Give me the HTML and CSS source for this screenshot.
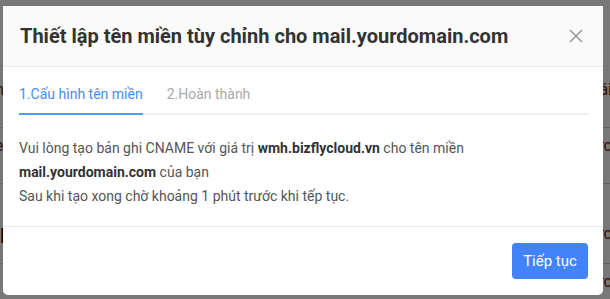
FILE: index.html
```html
<!DOCTYPE html>
<html lang="vi">
<head>
    <meta charset="UTF-8">
    <meta name="viewport" content="width=device-width, initial-scale=1.0">
    <title>Thiết lập tên miền</title>
    <link rel="stylesheet" href="styles.css">
</head>
<body>
<!-- Trang phía sau lớp phủ -->
<div class="page">
    <div class="page-row"><span class="cell-left">Tên miền</span><span class="cell-right">Trạng thái</span></div>
    <div class="page-row"><span class="cell-left">mail.example.vn</span><span class="cell-right">Chưa xác thực</span></div>
    <div class="page-row tall"><span class="cell-left dark">Cấu hình</span><span class="cell-right">Chưa xác thực</span></div>
    <div class="page-row"><span class="cell-left dark">Mã</span><span class="cell-right">Đã xác thực</span></div>
</div>

<div class="overlay">
    <div class="modal">
        <div class="modal-header">
            <h2 class="modal-title">Thiết lập tên miền tùy chỉnh cho mail.yourdomain.com</h2>
            <button class="modal-close" aria-label="Đóng">
                <svg width="14" height="14" viewBox="0 0 14 14">
                    <path d="M1 1L13 13M13 1L1 13" stroke="#999" stroke-width="1.6" fill="none"/>
                </svg>
            </button>
        </div>

        <div class="modal-body">
            <div class="steps">
                <div class="step active">1.Cấu hình tên miền</div>
                <div class="step">2.Hoàn thành</div>
            </div>

            <div class="step-content">
                <p>Vui lòng tạo bản ghi CNAME với giá trị <b>wmh.bizflycloud.vn</b> cho tên miền <b>mail.yourdomain.com</b> của bạn</p>
                <p>Sau khi tạo xong chờ khoảng 1 phút trước khi tếp tục.</p>
            </div>
        </div>

        <div class="modal-footer">
            <button class="btn-primary">Tiếp tục</button>
        </div>
    </div>
</div>
</body>
</html>
```

FILE: styles.css
```css
body {
    margin: 0;
    padding: 0;
    font-family: Roboto, 'Liberation Sans', sans-serif;
    background-color: #ffffff;
    height: 100vh;
    overflow: hidden;
}

/* Trang phía sau */
.page {
    height: 100vh;
    overflow: hidden;
    padding-top: 72px;
    box-sizing: border-box;
}

.page-row {
    display: flex;
    justify-content: space-between;
    height: 56px;
    padding: 8px 0;
    box-sizing: border-box;
    border-bottom: 1px solid #cfcfcf;
    font-size: 16px;
    color: #5a2a1a;
    margin: 0 -2px 0 -40px;
}

.page-row.tall {
    height: 80px;
    padding-top: 40px;
}

.cell-left.dark {
    color: #111;
    font-size: 20px;
}

/* Lớp phủ */
.overlay {
    position: fixed;
    inset: 0;
    background-color: rgba(0, 0, 0, 0.53);
}

.modal {
    width: 600px;
    margin: 6px 0 0 3px;
    background-color: #ffffff;
    border-radius: 0 0 5px 5px;
}

/* Tiêu đề */
.modal-header {
    display: flex;
    align-items: center;
    justify-content: space-between;
    height: 60px;
    padding: 0 17px 0 17px;
    background-color: #fafafa;
    border-bottom: 1px solid #ebebeb;
}

.modal-title {
    margin: 0;
    font-size: 20px;
    font-weight: 700;
    color: #333333;
}

.modal-close {
    border: none;
    background: none;
    padding: 0;
    width: 14px;
    height: 14px;
    margin-right: 3px;
    cursor: pointer;
}

/* Nội dung */
.modal-body {
    padding: 17px 15px 18px 16px;
    border-bottom: 1px solid #ebebeb;
}

.steps {
    display: flex;
    gap: 24px;
    border-bottom: 2px solid #eeeeee;
}

.step {
    font-size: 14px;
    line-height: 20px;
    color: #a9a9a9;
    padding-bottom: 9px;
    margin-bottom: -2px;
    border-bottom: 2px solid transparent;
}

.step.active {
    color: #4a8df0;
    border-bottom-color: #4a9cf5;
}

.step-content {
    padding-top: 21px;
    font-size: 14px;
    line-height: 24px;
    color: #555555;
}

.step-content p {
    margin: 0;
}

.step-content b {
    color: #333333;
}

/* Chân */
.modal-footer {
    display: flex;
    justify-content: flex-end;
    padding: 16px 15px 16px 16px;
}

.btn-primary {
    width: 76px;
    height: 36px;
    border: none;
    border-radius: 4px;
    background-color: #4283fa;
    color: #ffffff;
    font-family: Roboto, 'Liberation Sans', sans-serif;
    font-size: 15px;
    cursor: pointer;
}
```
